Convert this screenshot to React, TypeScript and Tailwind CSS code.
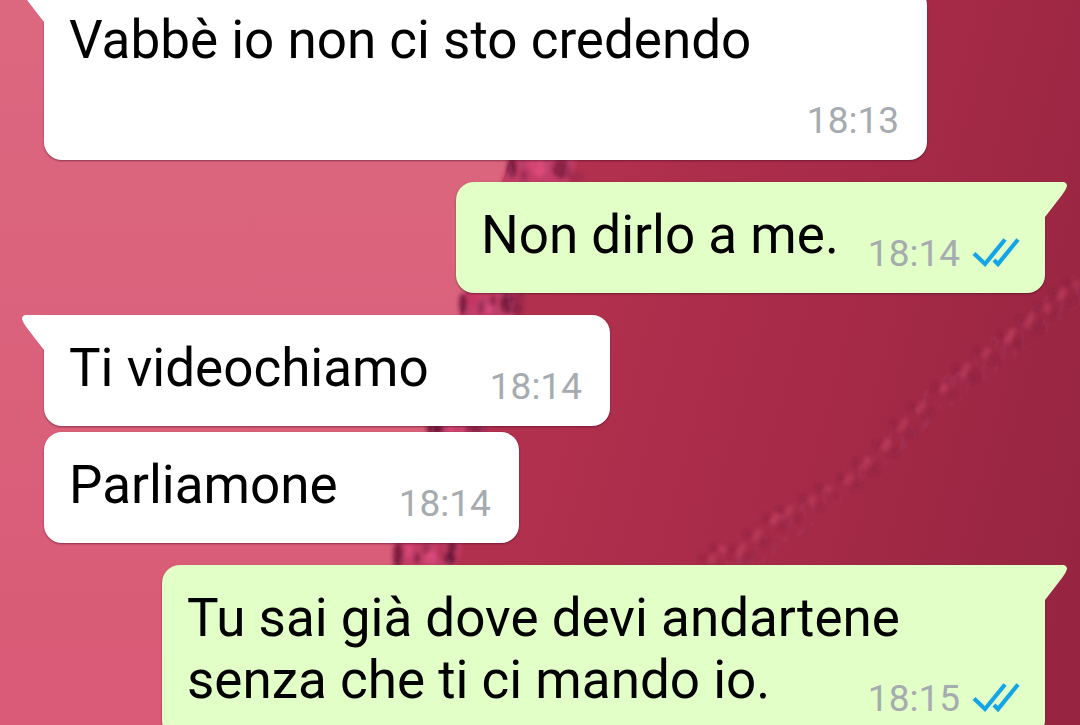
import clsx from 'clsx'

interface Message {
  id: number
  text: string
  time: string
  outgoing: boolean
  grouped?: boolean
}

const MESSAGES: Message[] = [
  { id: 1, text: 'Vabbè io non ci sto credendo', time: '18:13', outgoing: false },
  { id: 2, text: 'Non dirlo a me.', time: '18:14', outgoing: true },
  { id: 3, text: 'Ti videochiamo', time: '18:14', outgoing: false },
  { id: 4, text: 'Parliamone', time: '18:14', outgoing: false, grouped: true },
  { id: 5, text: 'Tu sai già dove devi andartene senza che ti ci mando io.', time: '18:15', outgoing: true },
]

// bright knots along the thin seam: x, y, half length
const STITCHES = [
  [712, 559, 4], [722, 549, 3], [741, 550, 6], [757, 535, 6], [775, 519, 5], [789, 511, 5], [812, 500, 4], [828, 489, 2],
  [849, 479, 5], [866, 463, 6], [886, 445, 5], [903, 425, 6], [921, 407, 5], [944, 388, 4], [965, 370, 7], [986, 353, 5],
  [1010, 336, 7], [1029, 321, 7], [1047, 308, 4], [1062, 294, 5], [1076, 284, 3],
]

// flecks on the thick fold: x, y, rx, ry, colour
const FLECKS: [number, number, number, number, string][] = [
  [512, 168, 5, 10, '#7a1c40'], [524, 176, 4, 7, '#a32a52'], [540, 168, 8, 9, '#dc4a78'], [552, 176, 6, 5, '#c83a67'],
  [561, 169, 9, 10, '#8a2044'], [576, 177, 8, 5, '#a32a4e'], [532, 164, 4, 4, '#d84675'],
  [463, 304, 4, 11, '#7a1c40'], [472, 299, 5, 8, '#c73563'], [481, 307, 3, 6, '#8d2148'], [493, 301, 3, 6, '#8d2148'],
  [489, 309, 4, 5, '#dc4a78'], [507, 303, 7, 11, '#7b1d3e'], [517, 309, 6, 7, '#8f2345'], [519, 298, 6, 7, '#9c284b'],
  [435, 429, 9, 5, '#6e1738'], [450, 429, 5, 4, '#d84675'], [462, 429, 4, 3, '#dc4a78'], [476, 429, 12, 4, '#8a2044'],
  [398, 555, 5, 13, '#7f1d41'], [409, 550, 4, 8, '#d84675'], [417, 558, 3, 6, '#8d2148'], [426, 549, 4, 6, '#a32a52'],
  [431, 558, 6, 7, '#dc4a78'], [441, 552, 3, 9, '#b23058'], [450, 558, 6, 7, '#6e1738'], [452, 547, 5, 6, '#7b1d3e'],
]

const Wallpaper = () => (
  <svg
    className="absolute inset-0 h-full w-full"
    viewBox="0 0 1080 725"
    preserveAspectRatio="xMidYMid slice"
    aria-hidden="true"
  >
    <defs>
      <linearGradient id="light" x1="0" y1="0" x2="0" y2="1">
        <stop offset="0" stopColor="#dc6880" />
        <stop offset="1" stopColor="#d95a76" />
      </linearGradient>
      <linearGradient id="dark" gradientUnits="userSpaceOnUse" x1="480" y1="250" x2="1110" y2="420">
        <stop offset="0" stopColor="#b4324f" />
        <stop offset="0.5" stopColor="#a82b49" />
        <stop offset="1" stopColor="#972541" />
      </linearGradient>
      <filter id="soft">
        <feGaussianBlur stdDeviation="2" />
      </filter>
      <filter id="grain">
        <feTurbulence type="fractalNoise" baseFrequency="0.14 0.07" numOctaves="3" seed="4" />
        <feColorMatrix values="0 0 0 0 0.4  0 0 0 0 0.06  0 0 0 0 0.18  4 0 0 0 -1.9" />
        <feComposite in2="SourceAlpha" operator="in" />
      </filter>
    </defs>
    <rect width="1080" height="725" fill="url(#light)" />
    <path d="M560 0L530 120L508 165L464 300L430 430L395 560L340 725H1080V0Z" fill="url(#dark)" />
    <g filter="url(#soft)">
      <path d="M550 0L507 165L464 300L430 430L394 560L340 725H400L458 560L488 430L520 300L575 165L610 0Z" fill="#c43c66" />
      {FLECKS.map(([cx, cy, rx, ry, fill]) => (
        <ellipse key={`${cx}-${cy}`} cx={cx} cy={cy} rx={rx} ry={ry} fill={fill} />
      ))}
    </g>
    <path
      d="M550 0L507 165L464 300L430 430L394 560L340 725H400L455 560L485 430L516 300L572 165L610 0Z"
      filter="url(#grain)"
      opacity="0.35"
    />
    <path
      d="M680 580L850 465L920 395L1080 270V305L930 425L860 490L740 580Z"
      filter="url(#grain)"
      opacity="0.22"
    />
    <g filter="url(#soft)">
      {STITCHES.map(([x, y, r], i) => (
        <g key={x}>
          <path
            d={`M${x - r / 2} ${y + r}L${x + r / 2} ${y - r}`}
            stroke="#cf4a68"
            strokeWidth="6"
            opacity={i % 3 === 1 ? 0.6 : 0.45}
          />
          <circle cx={x - 9} cy={y - 1} r="4" fill="#85193a" opacity="0.45" />
          <circle cx={x + 8} cy={y + 7} r={r} fill="#85193a" opacity="0.35" />
        </g>
      ))}
    </g>
  </svg>
)

const Tail = ({ outgoing }: { outgoing: boolean }) => (
  <svg
    className={clsx('absolute top-0 h-9 w-6', outgoing ? '-right-[23px] text-[#e1ffc7]' : '-left-[23px] -scale-x-100 text-white')}
    viewBox="0 0 24 36"
    fill="currentColor"
    aria-hidden="true"
  >
    <path d="M0 0H20Q23 1 23 4Q22 8 18 13L1 35H0Z" />
  </svg>
)

const ReadTicks = () => (
  <svg
    className="h-8 w-12"
    viewBox="0 0 48 32"
    fill="none"
    stroke="#14a5e6"
    strokeWidth="4.2"
    role="img"
    aria-label="Letto"
  >
    <path d="M2 15.5L13 26L33 1.5" />
    <path d="M22 22L26 26L46 1.5" />
  </svg>
)

const Bubble = ({ message }: { message: Message }) => {
  const { text, time, outgoing, grouped } = message

  return (
    <li
      className={clsx(
        'relative flow-root max-w-[883px] rounded-[18px] pl-[25px] pt-[22px] pb-[17px] text-[53px] leading-[62px] text-black shadow-[0_1px_2px_rgba(60,10,30,0.5)]',
        outgoing ? 'self-end bg-[#e1ffc7] pr-[25px]' : 'self-start bg-white pr-7',
        outgoing && !grouped && 'rounded-tr-none',
        !outgoing && !grouped && 'rounded-tl-none',
        grouped ? 'mt-[6px]' : 'mt-[22px]'
      )}
    >
      {!grouped && <Tail outgoing={outgoing} />}
      {text}
      {/* floats beside the last line, or below it when there is no room */}
      <div
        className={clsx(
          'float-right mt-7 flex items-center gap-3 text-[37px] leading-[44px] text-[#a5abae]',
          outgoing ? 'ml-[29px]' : 'ml-[61px]'
        )}
      >
        <time>{time}</time>
        {outgoing && <ReadTicks />}
      </div>
    </li>
  )
}

export default function App() {
  return (
    <main className="relative h-screen overflow-hidden bg-[#a82b49] font-[Roboto,sans-serif]">
      <Wallpaper />
      <ul className="relative -mt-[35px] flex flex-col pl-11 pr-[35px]">
        {MESSAGES.map((message) => (
          <Bubble key={message.id} message={message} />
        ))}
      </ul>
    </main>
  )
}
